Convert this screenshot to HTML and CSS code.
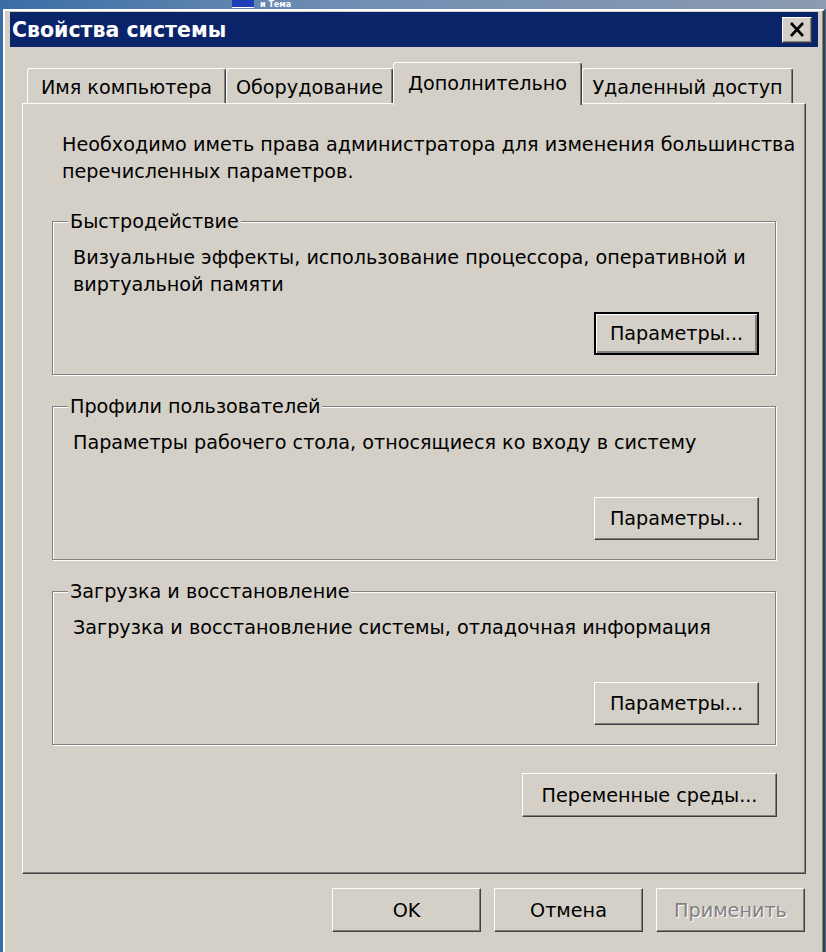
FILE: index.html
```html
<!DOCTYPE html>
<html lang="ru">
<head>
    <meta charset="UTF-8">
    <link rel="stylesheet" href="styles.css">
</head>
<body>
    <div class="desktop-strip">
        <span class="strip-icon"></span>
        <span class="strip-text">и Тема</span>
    </div>

    <div class="window">
        <div class="titlebar">
            <span class="title">Свойства системы</span>
            <div class="close-btn">
                <svg width="16" height="15" viewBox="0 0 16 15">
                    <path d="M2,1 L14,14 M14,1 L2,14" stroke="#000" stroke-width="2.6" fill="none"/>
                </svg>
            </div>
        </div>

        <div class="content">
            <div class="tabs">
                <div class="tab tab-1">Имя компьютера</div>
                <div class="tab tab-2">Оборудование</div>
                <div class="tab tab-3 active">Дополнительно</div>
                <div class="tab tab-4">Удаленный доступ</div>
            </div>

            <div class="panel">
                <p class="note">Необходимо иметь права администратора для изменения большинства<br>перечисленных параметров.</p>

                <fieldset class="group">
                    <legend>Быстродействие</legend>
                    <div class="group-body">
                        <p class="group-text">Визуальные эффекты, использование процессора, оперативной и<br>виртуальной памяти</p>
                        <button class="btn btn-params btn-default">Параметры...</button>
                    </div>
                </fieldset>

                <fieldset class="group">
                    <legend>Профили пользователей</legend>
                    <div class="group-body">
                        <p class="group-text">Параметры рабочего стола, относящиеся ко входу в систему</p>
                        <button class="btn btn-params">Параметры...</button>
                    </div>
                </fieldset>

                <fieldset class="group">
                    <legend>Загрузка и восстановление</legend>
                    <div class="group-body">
                        <p class="group-text">Загрузка и восстановление системы, отладочная информация</p>
                        <button class="btn btn-params">Параметры...</button>
                    </div>
                </fieldset>

                <div class="panel-actions">
                    <button class="btn btn-env">Переменные среды...</button>
                </div>
            </div>

            <div class="footer">
                <button class="btn btn-footer">OK</button>
                <button class="btn btn-footer">Отмена</button>
                <button class="btn btn-footer" disabled>Применить</button>
            </div>
        </div>
    </div>
</body>
</html>
```

FILE: styles.css
```css
:root {
    --face: #d4d0c8;
    --light: #ffffff;
    --shadow: #808080;
    --dark: #404040;
    --title: #0a246a;
}

body {
    margin: 0;
    height: 952px;
    overflow: hidden;
    background: #3a6ea5;
    font-family: "DejaVu Sans", sans-serif;
    font-size: 19.2px;
    color: #000;
}

/* Bande du bureau au-dessus de la fenêtre */
.desktop-strip {
    height: 9px;
    overflow: hidden;
    display: flex;
    align-items: flex-start;
    gap: 6px;
    padding-left: 232px;
    background: linear-gradient(to right, #3a6ea5, #6f8db3 40%, #8b9bb0);
}

.strip-icon {
    width: 22px;
    height: 7px;
    background: #1d3fb8;
    border-bottom: 1px solid #fff;
}

.strip-text {
    font-size: 8px;
    line-height: 9px;
    color: #fff;
    font-weight: bold;
}

.window {
    margin-left: 3px;
    width: 822px;
    height: 970px;
    box-sizing: border-box;
    background: var(--face);
    border: 2px solid;
    border-color: var(--light) var(--dark) var(--dark) var(--light);
    box-shadow: inset -1px -1px 0 var(--shadow);
    padding: 1px 5px 0 5px;
}

.titlebar {
    height: 35px;
    background: var(--title);
    display: flex;
    align-items: center;
    justify-content: space-between;
    padding: 0 6px 0 2px;
}

.title {
    color: #fff;
    font-weight: bold;
    font-size: 20.5px;
}

.close-btn {
    width: 30px;
    height: 26px;
    box-sizing: border-box;
    background: var(--face);
    border: 1px solid;
    border-color: var(--light) var(--dark) var(--dark) var(--light);
    box-shadow: inset -1px -1px 0 var(--shadow);
    display: flex;
    align-items: center;
    justify-content: center;
}

.content {
    padding: 15px 12px 0 12px;
}

/* Onglets */
.tabs {
    display: flex;
    align-items: flex-end;
    height: 41px;
    padding-left: 5px;
}

.tab {
    height: 35px;
    box-sizing: border-box;
    padding-top: 5px;
    text-align: center;
    line-height: 27px;
    white-space: nowrap;
    background: var(--face);
    border: 1px solid;
    border-bottom: none;
    border-color: var(--light) var(--dark) var(--dark) var(--light);
    border-radius: 3px 3px 0 0;
    box-shadow: inset -1px 0 0 var(--shadow);
}

.tab-1 { width: 199px; }
.tab-2 { width: 167px; }
.tab-3 { width: 189px; }
.tab-4 { width: 211px; }

.tab.active {
    height: 43px;
    margin-bottom: -2px;
    padding-top: 7px;
    position: relative;
    z-index: 1;
}

.panel {
    height: 771px;
    box-sizing: border-box;
    border: 1px solid;
    border-color: var(--light) var(--dark) var(--dark) var(--light);
    box-shadow: inset -1px -1px 0 var(--shadow);
    padding-top: 27px;
}

.note {
    margin: 0 0 0 39px;
    line-height: 27px;
    white-space: nowrap;
}

/* Groupes */
.group {
    margin: 23px 29px 0 29px;
    padding: 0 16px 19px 20px;
    border: 1px solid var(--shadow);
    box-shadow: inset 1px 1px 0 var(--light), 1px 1px 0 var(--light);
    min-inline-size: 0;
}

.group + .group {
    margin-top: 18px;
}

.group legend {
    padding: 0 2px;
    margin-left: -5px;
    line-height: 27px;
    background: var(--face);
}

.group-body {
    height: 120px;
    display: flex;
    flex-direction: column;
}

.group-text {
    margin: 9px 0 0 0;
    line-height: 27px;
    white-space: nowrap;
}

/* Boutons */
.btn {
    font: inherit;
    color: #000;
    background: var(--face);
    border: 1px solid;
    border-color: var(--light) var(--dark) var(--dark) var(--light);
    box-shadow: inset -1px -1px 0 var(--shadow);
    padding: 0;
    box-sizing: border-box;
}

.btn-default {
    border: 2px solid #000;
    box-shadow: inset 1px 1px 0 var(--light), inset -2px -2px 0 var(--shadow);
}

.btn:disabled {
    color: var(--shadow);
    text-shadow: 1px 1px 0 var(--light);
}

.btn-params {
    width: 165px;
    height: 43px;
    margin-top: auto;
    align-self: flex-end;
}

.panel-actions {
    display: flex;
    justify-content: flex-end;
    margin: 28px 28px 0 0;
}

.btn-env {
    width: 255px;
    height: 44px;
}

.footer {
    display: flex;
    justify-content: flex-end;
    gap: 13px;
    margin-top: 14px;
    padding-right: 1px;
}

.btn-footer {
    width: 149px;
    height: 44px;
}
```
